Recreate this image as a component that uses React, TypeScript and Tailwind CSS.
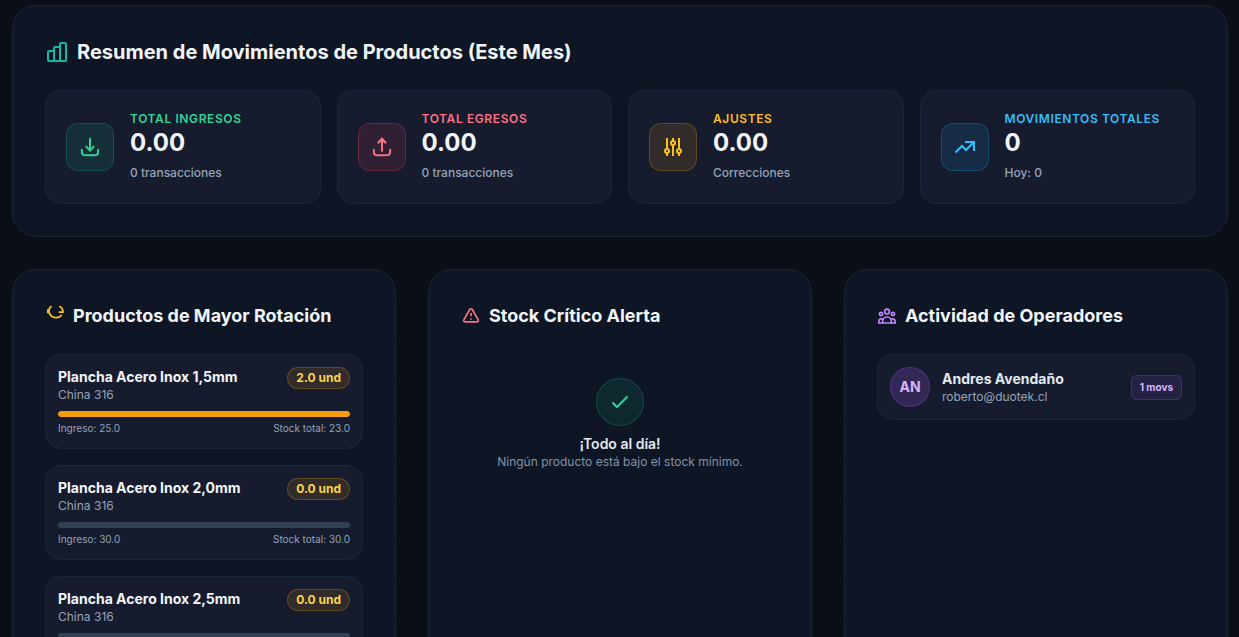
import type { ReactNode } from 'react';

interface Stat {
  label: string;
  value: string;
  detail: string;
  labelClass: string;
  iconClass: string;
  icon: ReactNode;
}

interface Product {
  name: string;
  origin: string;
  rotation: number;
  income: number;
  stock: number;
}

const STROKE = {
  fill: 'none',
  stroke: 'currentColor',
  strokeWidth: 2,
  strokeLinecap: 'round',
  strokeLinejoin: 'round',
  'aria-hidden': true,
} as const;

const TRAY = 'M3 15c0 2.8 0 4.2.9 5.1.9.9 2.3.9 5.1.9h6c2.8 0 4.2 0 5.1-.9.9-.9.9-2.3.9-5.1';

const STATS: Stat[] = [
  {
    label: 'Total Ingresos',
    value: '0.00',
    detail: '0 transacciones',
    labelClass: 'text-[#34d399]',
    iconClass: 'border-[#10b981]/25 bg-[#10b981]/12 text-[#34d399]',
    icon: (
      <svg viewBox="0 0 24 24" className="size-[22px]" {...STROKE} strokeWidth={2.2}>
        <path d={TRAY} />
        <path d="M12 3v13m0 0 4-4.4M12 16l-4-4.4" />
      </svg>
    ),
  },
  {
    label: 'Total Egresos',
    value: '0.00',
    detail: '0 transacciones',
    labelClass: 'text-[#fb7185]',
    iconClass: 'border-[#f43f5e]/25 bg-[#f43f5e]/12 text-[#fb7185]',
    icon: (
      <svg viewBox="0 0 24 24" className="size-[22px]" {...STROKE} strokeWidth={2.2}>
        <path d={TRAY} />
        <path d="M12 16V3m0 0 4 4.4M12 3 8 7.4" />
      </svg>
    ),
  },
  {
    label: 'Ajustes',
    value: '0.00',
    detail: 'Correcciones',
    labelClass: 'text-[#fbbf24]',
    iconClass: 'border-[#f59e0b]/25 bg-[#f59e0b]/12 text-[#fbbf24]',
    icon: (
      <svg viewBox="0 0 24 24" className="size-6" {...STROKE} strokeLinecap="butt">
        <path d="M6 3v11M6 18v3M12 3v3M12 10v11M18 3v11M18 18v3" />
        <circle cx="6" cy="16" r="2" />
        <circle cx="12" cy="8" r="2" />
        <circle cx="18" cy="16" r="2" />
      </svg>
    ),
  },
  {
    label: 'Movimientos Totales',
    value: '0',
    detail: 'Hoy: 0',
    labelClass: 'text-[#38bdf8]',
    iconClass: 'border-[#0ea5e9]/25 bg-[#0ea5e9]/12 text-[#38bdf8]',
    icon: (
      <svg viewBox="0 0 24 24" className="size-6" {...STROKE} strokeLinecap="butt" strokeLinejoin="miter">
        <path d="M2.5 17.5 9 11l4 4 8-8" />
        <path d="M12 7h9v9" />
      </svg>
    ),
  },
];

const PRODUCTS: Product[] = [
  { name: 'Plancha Acero Inox 1,5mm', origin: 'China 316', rotation: 2, income: 25, stock: 23 },
  { name: 'Plancha Acero Inox 2,0mm', origin: 'China 316', rotation: 0, income: 30, stock: 30 },
  { name: 'Plancha Acero Inox 2,5mm', origin: 'China 316', rotation: 0, income: 30, stock: 30 },
];

const MAX_ROTATION = Math.max(...PRODUCTS.map((p) => p.rotation));

const panelClass = 'rounded-3xl border border-[#1c2536] bg-[#0e1524] p-8';
const cardClass = 'rounded-2xl border border-[#1b2739] bg-[#161c2e]';

function StatCard({ stat }: { stat: Stat }) {
  return (
    <div className={`${cardClass} flex items-center gap-4 p-5`}>
      <div className={`flex size-12 shrink-0 items-center justify-center rounded-xl border ${stat.iconClass}`}>
        {stat.icon}
      </div>
      <div className="min-w-0 pb-0.5">
        <p className={`text-xs font-semibold uppercase tracking-wider ${stat.labelClass}`}>{stat.label}</p>
        <p className="text-2xl font-bold text-[#f1f5f9]">{stat.value}</p>
        <p className="mt-1.5 text-xs font-medium text-[#94a3b8]">{stat.detail}</p>
      </div>
    </div>
  );
}

function PanelTitle({ icon, children }: { icon: ReactNode; children: ReactNode }) {
  return (
    <h2 className="mb-6 flex items-center gap-2 text-lg/7 font-bold text-[#f1f5f9]">
      {icon}
      {children}
    </h2>
  );
}

function ProductCard({ product }: { product: Product }) {
  const percent = MAX_ROTATION > 0 ? (product.rotation / MAX_ROTATION) * 100 : 0;

  return (
    <li className={`${cardClass} p-3`}>
      <div className="flex items-start justify-between">
        <div>
          <p className="text-sm font-bold text-[#f1f5f9]">{product.name}</p>
          <p className="text-xs text-[#94a3b8]">{product.origin}</p>
        </div>
        <span className="rounded-full border border-[#f59e0b]/25 bg-[#f59e0b]/12 px-2 py-0.5 text-xs font-bold text-[#fcd34d]">
          {product.rotation.toFixed(1)} und
        </span>
      </div>
      <div className="mt-2 h-1.5 overflow-hidden rounded-full bg-[#334155]">
        <div className="h-full rounded-full bg-[#f59e0b]" style={{ width: `${percent}%` }} />
      </div>
      <div className="mt-1 flex justify-between text-[10px]/[15px] text-[#94a3b8]">
        <span>Ingreso: {product.income.toFixed(1)}</span>
        <span>Stock total: {product.stock.toFixed(1)}</span>
      </div>
    </li>
  );
}

export default function App() {
  return (
    <main className="min-h-screen bg-[#0a0e17] bg-[radial-gradient(circle,#101922_1px,transparent_1px)] bg-[length:40px_40px] bg-[position:-20px_-3px] pt-[5px] pr-[11px] pb-8 pl-3 font-['Inter',sans-serif]">
      <section className={panelClass}>
        <h1 className="mb-6 flex items-center gap-2 text-xl/7 font-bold text-[#f1f5f9]">
          <svg viewBox="0 0 24 24" className="size-6 text-[#14b8a6]" {...STROKE}>
            <rect x="3" y="11" width="6" height="10" rx="1" />
            <rect x="9" y="7" width="6" height="14" rx="1" />
            <rect x="15" y="3" width="6" height="18" rx="1" />
          </svg>
          Resumen de Movimientos de Productos (Este Mes)
        </h1>
        <div className="grid grid-cols-2 gap-4 md:grid-cols-4">
          {STATS.map((stat) => (
            <StatCard key={stat.label} stat={stat} />
          ))}
        </div>
      </section>

      <div className="mt-8 grid grid-cols-1 gap-8 md:grid-cols-3">
        <section className={panelClass}>
          <PanelTitle
            icon={
              <svg viewBox="0 0 20 20" className="size-5 text-[#fbbf24]" {...STROKE} strokeWidth={1.8} strokeLinecap="butt">
                <path d="M6.4 0C4 2 3.4 5.4 4.8 8.2c2 4 8.6 5 12 .8" />
                <path d="M14.2 0c2.6 1.4 3.8 3.6 3.8 6.2h-4.4M2.9 3.2v4" />
              </svg>
            }
          >
            Productos de Mayor Rotación
          </PanelTitle>
          <ul className="space-y-4">
            {PRODUCTS.map((product) => (
              <ProductCard key={product.name} product={product} />
            ))}
          </ul>
        </section>

        <section className={panelClass}>
          <PanelTitle
            icon={
              <svg viewBox="0 0 20 20" className="size-5 text-[#fb7185]" {...STROKE} strokeWidth={1.7}>
                <path d="M8.7 3.5 2.9 13.6a1.5 1.5 0 0 0 1.3 2.3h11.6a1.5 1.5 0 0 0 1.3-2.3L11.3 3.5a1.5 1.5 0 0 0-2.6 0Z" />
                <path d="M10 7.6v2M10 12.8v.1" />
              </svg>
            }
          >
            Stock Crítico Alerta
          </PanelTitle>
          <div className="flex flex-col items-center py-6 text-center">
            <div className="mb-2 flex size-12 items-center justify-center rounded-full border border-[#10b981]/25 bg-[#10b981]/12 text-[#34d399]">
              <svg viewBox="0 0 24 24" className="size-6" {...STROKE}>
                <path d="m5 13 4 4L19 7" />
              </svg>
            </div>
            <p className="text-sm font-semibold text-[#e2e8f0]">¡Todo al día!</p>
            <p className="text-xs text-[#8492a8]">Ningún producto está bajo el stock mínimo.</p>
          </div>
        </section>

        <section className={panelClass}>
          <PanelTitle
            icon={
              <svg viewBox="0 0 20 20" className="size-5 text-[#c084fc]" {...STROKE} strokeWidth={1.7}>
                <circle cx="10" cy="5.6" r="2.4" />
                <circle cx="4" cy="8" r="1.6" />
                <circle cx="16" cy="8" r="1.6" />
                <path d="M1.8 17h16.4v-1.6a2.6 2.6 0 0 0-4.1-2.1M1.8 17v-1.6a2.6 2.6 0 0 1 4.1-2.1" />
                <path d="M5.6 17v-1.6a4.4 4.4 0 0 1 8.8 0V17" />
              </svg>
            }
          >
            Actividad de Operadores
          </PanelTitle>
          <div className={`${cardClass} flex items-center gap-3 p-3`}>
            <div className="flex size-10 shrink-0 items-center justify-center rounded-full border border-[#a855f7]/25 bg-[#a855f7]/20 text-sm font-bold text-[#d8b4fe]">
              AN
            </div>
            <div className="min-w-0 flex-1">
              <p className="text-sm font-bold text-[#e2e8f0]">Andres Avendaño</p>
              <p className="text-xs text-[#94a3b8]">roberto@duotek.cl</p>
            </div>
            <span className="rounded-md border border-[#a855f7]/25 bg-[#a855f7]/10 px-2 py-1 text-[10px]/[15px] font-bold text-[#d8b4fe]">
              1 movs
            </span>
          </div>
        </section>
      </div>
    </main>
  );
}
